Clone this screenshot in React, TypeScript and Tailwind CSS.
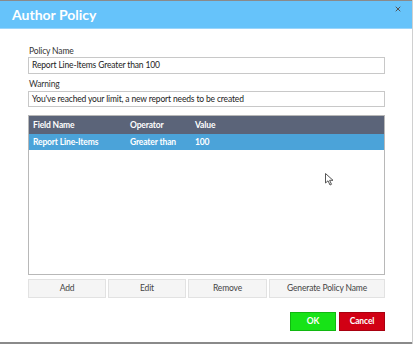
import { X } from 'lucide-react';

function Cursor() {
  return (
    <svg className="absolute left-[325px] top-[173px]" width="9" height="13" viewBox="0 0 9 13">
      <path d="M0.5 0.5 L0.5 10 L3 7.8 L5 12 L6.5 11.3 L4.6 7.3 L8 7.3 Z" fill="white" stroke="#555" strokeWidth="1" />
    </svg>
  );
}

export default function App() {
  const font = { fontFamily: 'Lato, "Open Sans", sans-serif' };

  return (
    <div className="relative w-[413px] h-[344px] bg-white overflow-hidden" style={font}>
      <div className="h-[1px] bg-[#8a8a8a]" />
      <div className="relative h-[28px] bg-[#66c3fa] border-b border-[#9ad5fb] flex items-center pl-3">
        <span className="text-white font-bold text-[14px] leading-none">Author Policy</span>
        <X className="absolute right-[11px] top-[4px] text-[#555]" size={8} strokeWidth={3} />
      </div>

      <div className="px-[28px] pt-[18px] w-[413px] text-[8.5px] tracking-[-0.15px]">
        <div className="leading-[9px] text-[#333] mb-[1px] ml-[1px]">Policy Name</div>
        <div className="w-[357px] h-[17px] border border-[#c8c8c8] flex items-center px-[3px] text-[#222]">
          Report Line-Items Greater than 100
        </div>
        <div className="leading-[9px] text-[#333] mt-[6px] mb-[2px] ml-[1px]">Warning</div>
        <div className="w-[357px] h-[16px] border border-[#c8c8c8] flex items-center px-[3px] text-[#222]">
          You've reached your limit, a new report needs to be created
        </div>

        <div className="mt-[8px] w-[357px] h-[160px] border border-[#b8b8b8] flex flex-col">
          <div className="h-[18px] bg-[#5b6479] flex items-center text-white font-bold">
            <span className="w-[101px] pl-[4px]">Field Name</span>
            <span className="w-[65px]">Operator</span>
            <span>Value</span>
          </div>
          <div className="h-[16px] bg-[#4ba3d9] flex items-center text-white font-bold">
            <span className="w-[101px] pl-[4px]">Report Line-Items</span>
            <span className="w-[65px]">Greater than</span>
            <span>100</span>
          </div>
        </div>

        <div className="mt-[4px] flex gap-[2px] w-[357px] text-[#444]">
          <button className="w-[78px] h-[19px] bg-[#f5f5f5] border border-[#e2e2e2]">Add</button>
          <button className="w-[78px] h-[19px] bg-[#f5f5f5] border border-[#e2e2e2]">Edit</button>
          <button className="w-[79px] h-[19px] bg-[#f5f5f5] border border-[#e2e2e2]">Remove</button>
          <button className="flex-1 h-[19px] bg-[#f5f5f5] border border-[#e2e2e2]">Generate Policy Name</button>
        </div>

        <div className="mt-[14px] flex justify-end gap-[3px] w-[357px] font-bold text-white">
          <button className="w-[46px] h-[19px] bg-[#17e317] border border-[#10b810]">OK</button>
          <button className="w-[46px] h-[19px] bg-[#d10014] border border-[#a8000f]">Cancel</button>
        </div>
      </div>

      <div className="absolute left-0 right-0 bottom-0 h-[2px] bg-[#8a8a8a]" />
      <div className="absolute top-0 bottom-0 right-0 w-[1px] bg-[#d0d0d0]" />
      <Cursor />
    </div>
  );
}
